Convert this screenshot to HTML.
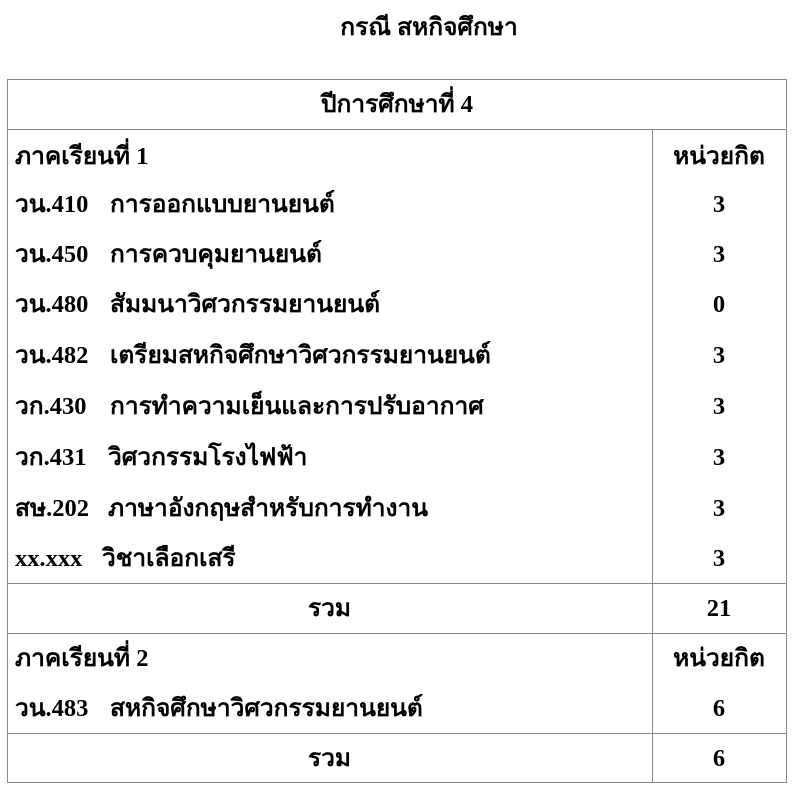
<!DOCTYPE html>
<html><head><meta charset="utf-8"><style>
body{margin:0;width:794px;height:788px;background:#fff;position:relative;font-family:"Liberation Serif","Noto Serif CJK SC",serif;font-weight:bold;font-size:24.5px;color:#000;overflow:hidden}
.t{position:absolute;line-height:30px;white-space:pre}
.c{position:absolute;text-align:center;line-height:30px}
.h{position:absolute;height:1px;background:#888;left:7px;width:780px}
.v{position:absolute;width:1px;background:#888}
</style></head><body>
<div class="c" style="left:0;width:858px;top:13px">กรณี สหกิจศึกษา</div>
<div class="h" style="top:79px"></div>
<div class="h" style="top:129px"></div>
<div class="h" style="top:583px"></div>
<div class="h" style="top:633px"></div>
<div class="h" style="top:733px"></div>
<div class="h" style="top:782px"></div>
<div class="v" style="left:7px;top:79px;height:704px"></div>
<div class="v" style="left:786px;top:79px;height:704px"></div>
<div class="v" style="left:652px;top:129px;height:654px"></div>
<div class="c" style="left:7px;width:780px;top:90px">ปีการศึกษาที่ 4</div>
<div class="t" style="left:15px;top:142px">ภาคเรียนที่ 1</div>
<div class="c" style="left:652px;width:134px;top:142px">หน่วยกิต</div>
<div class="t" style="left:15px;top:190px">วน.410</div><div class="t" style="left:110px;top:190px">การออกแบบยานยนต์</div><div class="c" style="left:652px;width:134px;top:190px">3</div>
<div class="t" style="left:15px;top:240px">วน.450</div><div class="t" style="left:110px;top:240px">การควบคุมยานยนต์</div><div class="c" style="left:652px;width:134px;top:240px">3</div>
<div class="t" style="left:15px;top:290px">วน.480</div><div class="t" style="left:110px;top:290px">สัมมนาวิศวกรรมยานยนต์</div><div class="c" style="left:652px;width:134px;top:290px">0</div>
<div class="t" style="left:15px;top:341px">วน.482</div><div class="t" style="left:110px;top:341px">เตรียมสหกิจศึกษาวิศวกรรมยานยนต์</div><div class="c" style="left:652px;width:134px;top:341px">3</div>
<div class="t" style="left:15px;top:392px">วก.430</div><div class="t" style="left:110px;top:392px">การทำความเย็นและการปรับอากาศ</div><div class="c" style="left:652px;width:134px;top:392px">3</div>
<div class="t" style="left:15px;top:443px">วก.431</div><div class="t" style="left:108px;top:443px">วิศวกรรมโรงไฟฟ้า</div><div class="c" style="left:652px;width:134px;top:443px">3</div>
<div class="t" style="left:15px;top:494px">สษ.202</div><div class="t" style="left:108px;top:494px">ภาษาอังกฤษสำหรับการทำงาน</div><div class="c" style="left:652px;width:134px;top:494px">3</div>
<div class="t" style="left:15px;top:544px">xx.xxx</div><div class="t" style="left:102px;top:544px">วิชาเลือกเสรี</div><div class="c" style="left:652px;width:134px;top:544px">3</div>
<div class="c" style="left:7px;width:645px;top:594px">รวม</div><div class="c" style="left:652px;width:134px;top:594px">21</div>
<div class="t" style="left:15px;top:644px">ภาคเรียนที่ 2</div><div class="c" style="left:652px;width:134px;top:644px">หน่วยกิต</div>
<div class="t" style="left:15px;top:694px">วน.483</div><div class="t" style="left:110px;top:694px">สหกิจศึกษาวิศวกรรมยานยนต์</div><div class="c" style="left:652px;width:134px;top:694px">6</div>
<div class="c" style="left:7px;width:645px;top:744px">รวม</div><div class="c" style="left:652px;width:134px;top:744px">6</div>
</body></html>
